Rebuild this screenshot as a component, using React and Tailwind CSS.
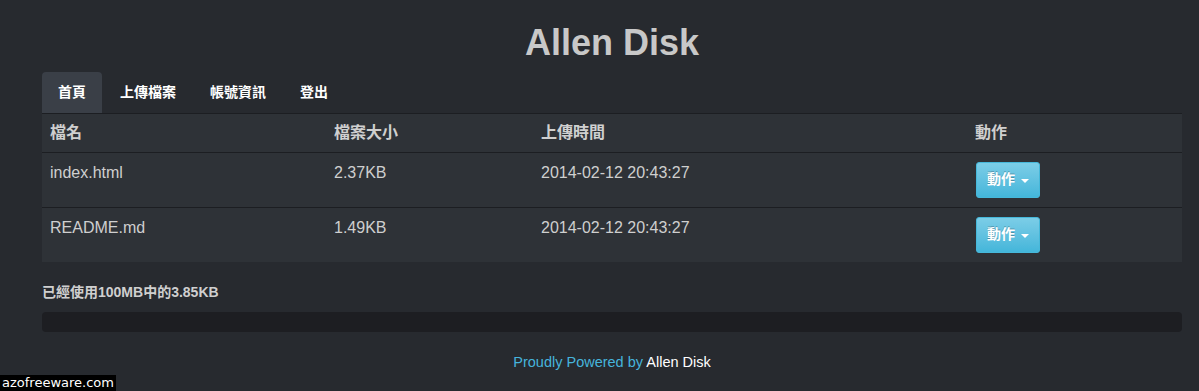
import { useState } from "react";

const files = [
  { name: "index.html", size: "2.37KB", time: "2014-02-12 20:43:27" },
  { name: "README.md", size: "1.49KB", time: "2014-02-12 20:43:27" },
];

const tabs = ["首頁", "上傳檔案", "帳號資訊", "登出"];

const ActionButton = () => (
  <button className="ml-[1px] flex items-center gap-[6px] h-[36px] w-[64px] justify-center rounded-[3px] border border-[#46b8da] bg-gradient-to-b from-[#7bcde7] to-[#43b6da] text-white text-[14px] font-bold [text-shadow:0_-1px_0_rgba(0,0,0,0.25)]">
    動作
    <span className="w-0 h-0 border-l-[4px] border-r-[4px] border-t-[4px] border-l-transparent border-r-transparent border-t-white mt-[2px]"></span>
  </button>
);

export default function App() {
  const [active] = useState(0);
  return (
    <div
      className="relative w-[1199px] h-[391px] bg-[#272a2f] overflow-hidden"
      style={{ fontFamily: '"Liberation Sans", "Noto Sans CJK TC", sans-serif' }}
    >
      <div className="w-[1140px] ml-[42px]">
        <h1 className="text-center text-[36px] font-bold text-[#c8c8c8] leading-[40px] pt-[23px] pb-[9px]">
          Allen Disk
        </h1>
        <ul className="flex border-b border-[#1c1e22]">
          {tabs.map((t, i) => (
            <li
              key={t}
              className={`px-[16px] mr-[2px] h-[41px] flex items-center text-[14px] font-bold text-white rounded-t-[4px] ${
                i === active ? "bg-[#3a3f47]" : ""
              }`}
            >
              {t}
            </li>
          ))}
        </ul>
        <table className="w-full table-fixed bg-[#2e3237] text-[#cfcfcf] text-[16px] border-collapse">
          <colgroup>
            <col className="w-[284px]" />
            <col className="w-[207px]" />
            <col className="w-[434px]" />
            <col />
          </colgroup>
          <thead>
            <tr className="h-[38px] border-b border-[#1c1e22]">
              <th className="text-left font-bold px-[8px]">檔名</th>
              <th className="text-left font-bold px-[8px]">檔案大小</th>
              <th className="text-left font-bold px-[8px]">上傳時間</th>
              <th className="text-left font-bold px-[8px]">動作</th>
            </tr>
          </thead>
          <tbody>
            {files.map((f, i) => (
              <tr key={f.name} className={i === 0 ? "border-b border-[#1c1e22]" : ""}>
                <td className="align-top px-[8px] pt-[9px] h-[55px] leading-[22px]">{f.name}</td>
                <td className="align-top px-[8px] pt-[9px] leading-[22px]">{f.size}</td>
                <td className="align-top px-[8px] pt-[9px] leading-[22px]">{f.time}</td>
                <td className="align-top px-[8px] pt-[9px]">
                  <ActionButton />
                </td>
              </tr>
            ))}
          </tbody>
        </table>
        <p className="mt-[20px] text-[14px] font-bold text-[#cfcfcf] leading-[20px]">
          已經使用100MB中的3.85KB
        </p>
        <div className="mt-[10px] h-[20px] rounded-[4px] bg-[#1d1e22]"></div>
        <p className="mt-[20px] text-center text-[14.5px] text-[#46b4dc] leading-[20px]">
          Proudly Powered by <span className="text-white">Allen Disk</span>
        </p>
      </div>
      <div
        className="absolute left-0 bottom-0 h-[16px] px-[2px] bg-black text-white text-[13px] leading-[16px]"
        style={{ fontFamily: '"DejaVu Sans", sans-serif' }}
      >
        azofreeware.com
      </div>
    </div>
  );
}
